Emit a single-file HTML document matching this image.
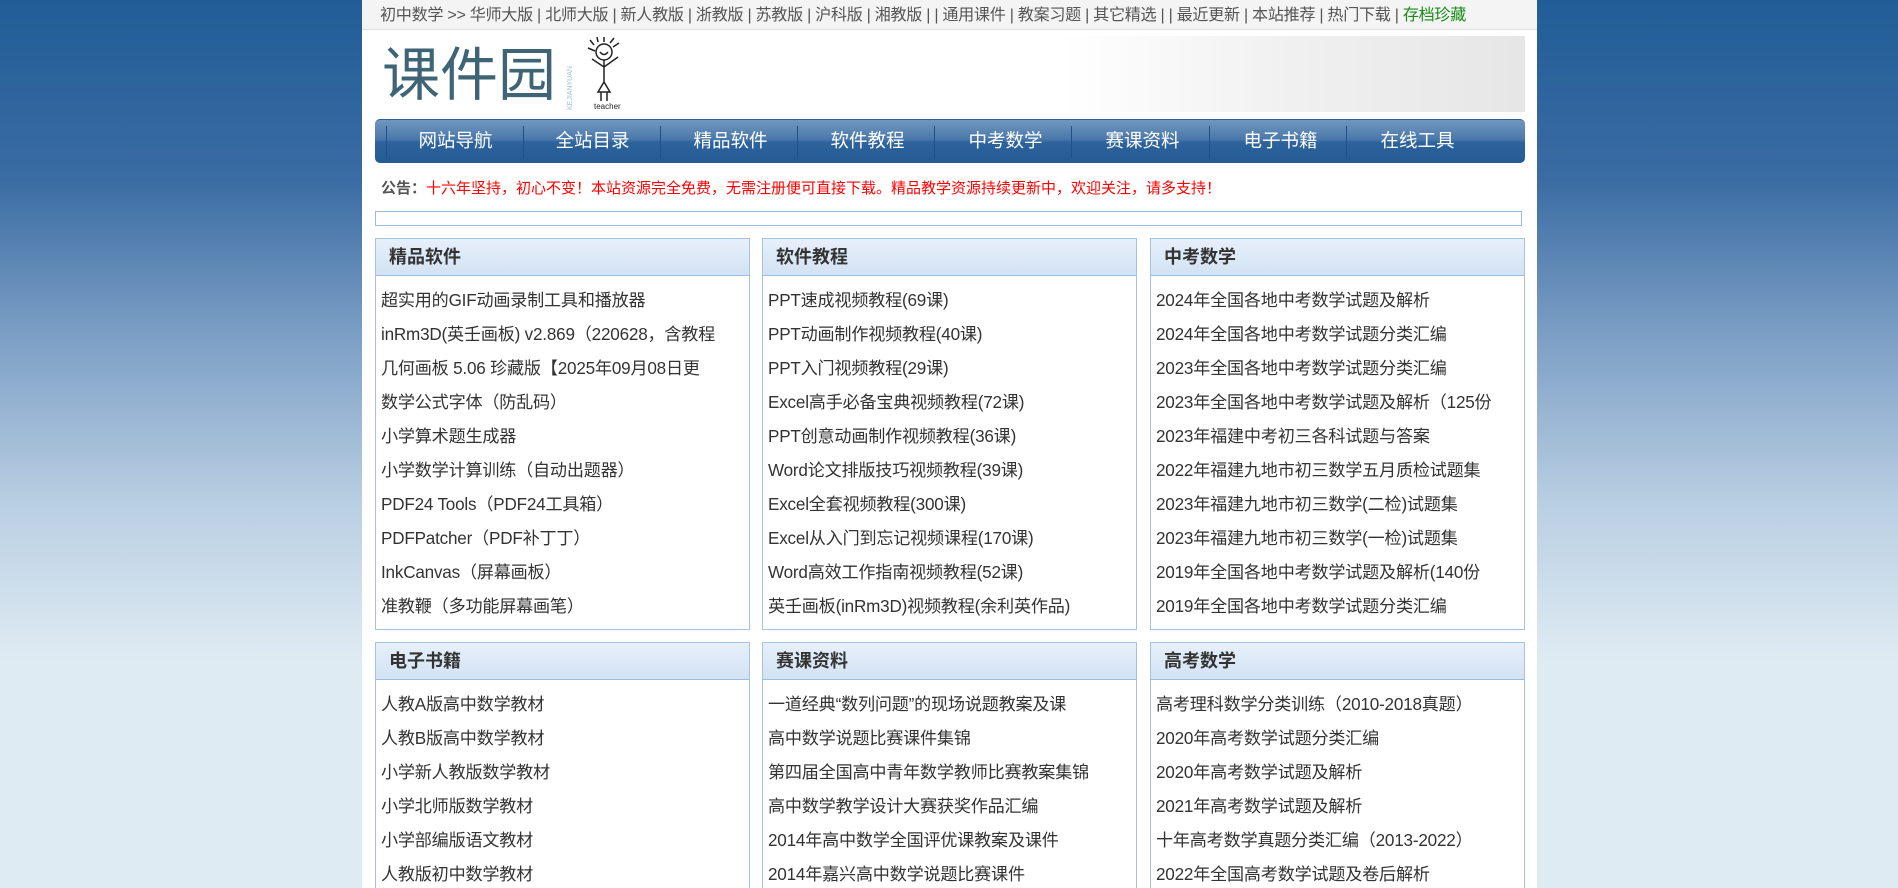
<!DOCTYPE html>
<html><head><meta charset="utf-8">
<style>
*{margin:0;padding:0;box-sizing:border-box}
html,body{width:1898px;height:888px;overflow:hidden}
body{font-family:"Liberation Sans","Noto Sans CJK SC",sans-serif;background:linear-gradient(#215d97 0px,#3a6ca3 180px,#7a9dc4 330px,#b8cee2 500px,#dfebf3 660px,#dfebf3 888px);position:relative}
#wrap{position:absolute;left:362px;top:0;width:1175px;height:888px;background:#fff;overflow:hidden}
#top{height:30px;background:#f4f4f4;border-bottom:1px solid #ddd;font-size:16.1px;color:#555;line-height:30px;padding-left:18px;white-space:nowrap;letter-spacing:-0.3px}
#top .g{color:#1a8a1a}
#logo{position:absolute;left:20px;top:38px;font-size:58px;color:#3e6475;line-height:64px;font-family:"Noto Sans CJK SC",sans-serif}
#banner{position:absolute;left:700px;top:36px;width:463px;height:76px;background:linear-gradient(90deg,#fff,#f0f0f0 50%,#e6e6e6)}
#nav{position:absolute;left:13px;top:119px;width:1150px;height:44px;border-radius:5px;background:linear-gradient(#7197c0,#4a78aa 45%,#2e639c 52%,#235b95);border-top:1px solid #2c5f95}
#nav span{position:absolute;top:0;width:137px;text-align:center;color:#fff;font-size:18.5px;line-height:42px}
#nav i{position:absolute;top:6px;width:1px;height:32px;background:#6f93bb;border-right:1px solid #1f5088}
#notice{position:absolute;left:19px;top:177px;font-size:15px;color:#f00;white-space:nowrap}
#notice b{color:#555}
#box{position:absolute;left:13px;top:211px;width:1147px;height:15px;border:1px solid #9dbbe0}
.p{position:absolute;width:375px;border:1px solid #a6c2e2;background:#fff;overflow:hidden}
.p h3{height:37px;background:linear-gradient(#e7f0fa,#d2e2f4);border-bottom:1px solid #9dbbe0;font-size:18px;color:#333;line-height:36px;padding-left:13px;font-weight:bold}
.p ul{list-style:none;padding:8px 0 0 5px}
.p li{font-size:17.1px;color:#333;height:34px;line-height:34px;white-space:nowrap;overflow:hidden;letter-spacing:-0.2px}
</style></head><body>
<div id="wrap">
<div id="top">初中数学 &gt;&gt; 华师大版 | 北师大版 | 新人教版 | 浙教版 | 苏教版 | 沪科版 | 湘教版 | | 通用课件 | 教案习题 | 其它精选 | | 最近更新 | 本站推荐 | 热门下载 | <span class="g">存档珍藏</span></div>
<div id="logo">课件园</div>
<div style="position:absolute;left:205px;top:40px;width:8px;height:70px;font-size:7px;color:#9cc3d8;writing-mode:vertical-rl;transform:rotate(180deg)">KEJIANYUAN</div>
<svg style="position:absolute;left:220px;top:37px" width="50" height="75" viewBox="0 0 50 75"><g fill="none" stroke="#222" stroke-width="1.5"><circle cx="22" cy="15" r="8"/><path d="M12 8 L8 3 M16 5 L15 0 M22 5 V0 M28 6 L32 1 M31 10 L37 6 M13 14 L6 11"/><path d="M18 15 Q22 20 26 15"/><path d="M22 23 V45 M22 30 L10 22 M22 30 L36 20 M22 45 L16 55 H28 L22 45 M19 55 V64 M25 55 V64"/></g><text x="12" y="72" font-size="8" fill="#222">teacher</text></svg>
<div id="banner"></div>
<div id="nav">
<i style="left:11px"></i><span style="left:12px">网站导航</span>
<i style="left:148px"></i><span style="left:149px">全站目录</span>
<i style="left:285px"></i><span style="left:287px">精品软件</span>
<i style="left:422px"></i><span style="left:424px">软件教程</span>
<i style="left:559px"></i><span style="left:562px">中考数学</span>
<i style="left:696px"></i><span style="left:699px">赛课资料</span>
<i style="left:834px"></i><span style="left:837px">电子书籍</span>
<i style="left:971px"></i><span style="left:974px">在线工具</span>
</div>
<div id="notice"><b>公告：</b>十六年坚持，初心不变！本站资源完全免费，无需注册便可直接下载。精品教学资源持续更新中，欢迎关注，请多支持！</div>
<div id="box"></div>

<div class="p" style="left:13px;top:238px;height:392px"><h3>精品软件</h3><ul>
<li>超实用的GIF动画录制工具和播放器</li><li>inRm3D(英壬画板) v2.869（220628，含教程</li><li>几何画板 5.06 珍藏版【2025年09月08日更</li><li>数学公式字体（防乱码）</li><li>小学算术题生成器</li><li>小学数学计算训练（自动出题器）</li><li>PDF24 Tools（PDF24工具箱）</li><li>PDFPatcher（PDF补丁丁）</li><li>InkCanvas（屏幕画板）</li><li>准教鞭（多功能屏幕画笔）</li></ul></div>
<div class="p" style="left:400px;top:238px;height:392px"><h3>软件教程</h3><ul>
<li>PPT速成视频教程(69课)</li><li>PPT动画制作视频教程(40课)</li><li>PPT入门视频教程(29课)</li><li>Excel高手必备宝典视频教程(72课)</li><li>PPT创意动画制作视频教程(36课)</li><li>Word论文排版技巧视频教程(39课)</li><li>Excel全套视频教程(300课)</li><li>Excel从入门到忘记视频课程(170课)</li><li>Word高效工作指南视频教程(52课)</li><li>英壬画板(inRm3D)视频教程(余利英作品)</li></ul></div>
<div class="p" style="left:788px;top:238px;height:392px"><h3>中考数学</h3><ul>
<li>2024年全国各地中考数学试题及解析</li><li>2024年全国各地中考数学试题分类汇编</li><li>2023年全国各地中考数学试题分类汇编</li><li>2023年全国各地中考数学试题及解析（125份</li><li>2023年福建中考初三各科试题与答案</li><li>2022年福建九地市初三数学五月质检试题集</li><li>2023年福建九地市初三数学(二检)试题集</li><li>2023年福建九地市初三数学(一检)试题集</li><li>2019年全国各地中考数学试题及解析(140份</li><li>2019年全国各地中考数学试题分类汇编</li></ul></div>

<div class="p" style="left:13px;top:642px;height:260px"><h3>电子书籍</h3><ul>
<li>人教A版高中数学教材</li><li>人教B版高中数学教材</li><li>小学新人教版数学教材</li><li>小学北师版数学教材</li><li>小学部编版语文教材</li><li>人教版初中数学教材</li></ul></div>
<div class="p" style="left:400px;top:642px;height:260px"><h3>赛课资料</h3><ul>
<li>一道经典“数列问题”的现场说题教案及课</li><li>高中数学说题比赛课件集锦</li><li>第四届全国高中青年数学教师比赛教案集锦</li><li>高中数学教学设计大赛获奖作品汇编</li><li>2014年高中数学全国评优课教案及课件</li><li>2014年嘉兴高中数学说题比赛课件</li></ul></div>
<div class="p" style="left:788px;top:642px;height:260px"><h3>高考数学</h3><ul>
<li>高考理科数学分类训练（2010-2018真题）</li><li>2020年高考数学试题分类汇编</li><li>2020年高考数学试题及解析</li><li>2021年高考数学试题及解析</li><li>十年高考数学真题分类汇编（2013-2022）</li><li>2022年全国高考数学试题及卷后解析</li></ul></div>
</div>
</body></html>
